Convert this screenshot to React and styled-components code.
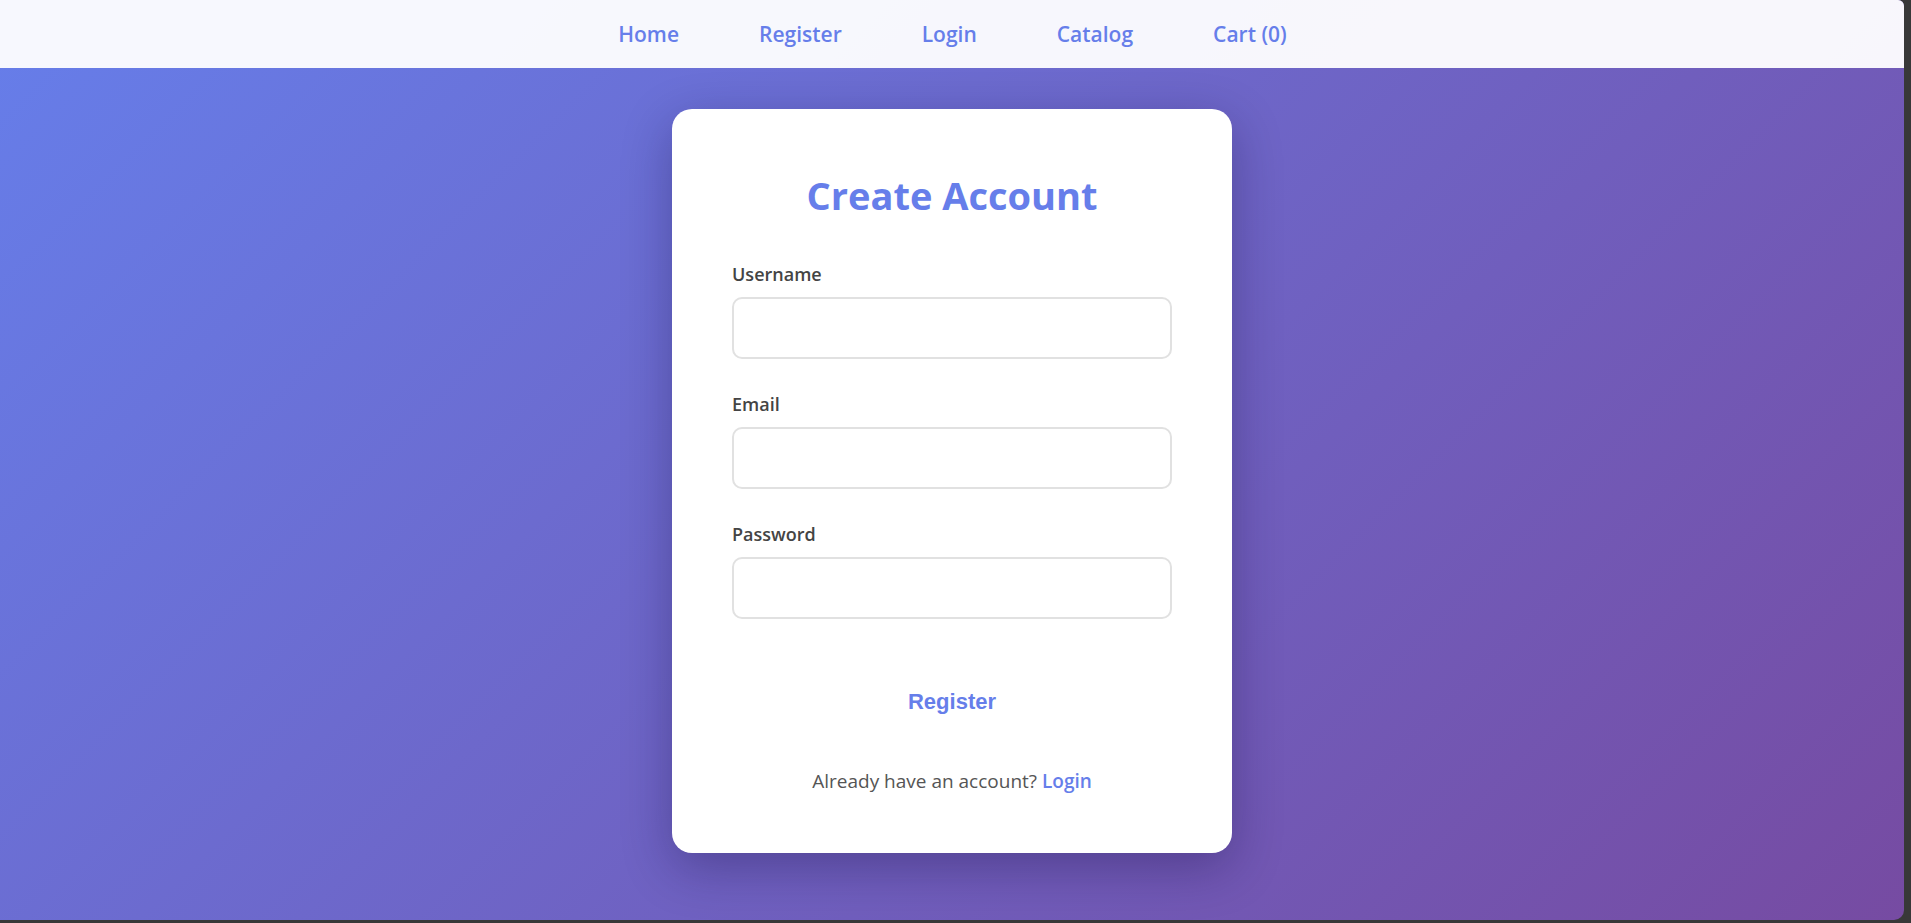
import React from "react";
import styled, { createGlobalStyle } from "styled-components";

const GlobalStyle = createGlobalStyle`
  html, body {
    margin: 0;
    padding: 0;
    background: #383838;
  }
  * { box-sizing: border-box; }
  body {
    font-family: "Segoe UI", "Open Sans", "Noto Sans", sans-serif;
  }
`;

const Frame = styled.div`
  width: 1904px;
  height: 920px;
  border-radius: 0 6px 10px 0;
  overflow: hidden;
  background: linear-gradient(135deg, #667eea 0%, #764ba2 100%);
  display: flex;
  flex-direction: column;
`;

const Nav = styled.nav`
  height: 68px;
  flex-shrink: 0;
  background: rgba(255, 255, 255, 0.95);
  display: flex;
  align-items: center;
  justify-content: center;
  gap: 80px;
  padding-left: 1px;
`;

const NavLink = styled.a`
  font-family: "Open Sans", "Noto Sans", sans-serif;
  font-size: 21px;
  font-weight: 600;
  color: #667eea;
  text-decoration: none;
  line-height: 28px;
  cursor: pointer;
`;

const Main = styled.main`
  flex: 1;
  display: flex;
  justify-content: center;
  align-items: flex-start;
  padding-top: 41px;
`;

const Card = styled.div`
  width: 560px;
  background: #ffffff;
  border-radius: 20px;
  padding: 60px 60px 59px;
  box-shadow: 0 15px 50px rgba(20, 10, 60, 0.32);
  font-family: "Open Sans", "Noto Sans", sans-serif;
`;

const Title = styled.h1`
  margin: 0 0 40px;
  text-align: center;
  font-size: 38px;
  line-height: 52px;
  font-weight: 700;
  color: #667eea;
`;

const Field = styled.div`
  margin-bottom: 32px;
`;

const Label = styled.label`
  display: block;
  font-size: 18px;
  font-weight: 600;
  line-height: 26px;
  color: #444;
  margin-bottom: 10px;
`;

const Input = styled.input`
  display: block;
  width: 100%;
  height: 62px;
  border: 2px solid #e1e1e1;
  border-radius: 10px;
  padding: 0 16px;
  font-size: 18px;
  font-family: inherit;
  background: #fff;
  outline: none;
`;

const SubmitButton = styled.button`
  display: block;
  width: 100%;
  height: 57px;
  margin-top: 54px;
  border: none;
  background: #ffffff;
  color: #667eea;
  font-family: "Liberation Sans", Arial, sans-serif;
  font-size: 22px;
  font-weight: 700;
  cursor: pointer;
`;

const Footer = styled.p`
  margin: 38px 0 0;
  text-align: center;
  font-size: 19px;
  line-height: 26px;
  color: #555;
`;

const FooterLink = styled.a`
  color: #667eea;
  font-weight: 600;
  text-decoration: none;
`;

const links = ["Home", "Register", "Login", "Catalog", "Cart (0)"];
const fields = [
  { id: "username", label: "Username", type: "text" },
  { id: "email", label: "Email", type: "email" },
  { id: "password", label: "Password", type: "password" },
];

export default function App() {
  return (
    <>
      <GlobalStyle />
      <Frame>
        <Nav>
          {links.map((l) => (
            <NavLink key={l}>{l}</NavLink>
          ))}
        </Nav>
        <Main>
          <Card>
            <Title>Create Account</Title>
            <form onSubmit={(e) => e.preventDefault()}>
              {fields.map((f) => (
                <Field key={f.id}>
                  <Label htmlFor={f.id}>{f.label}</Label>
                  <Input id={f.id} type={f.type} />
                </Field>
              ))}
              <SubmitButton type="submit">Register</SubmitButton>
            </form>
            <Footer>
              Already have an account? <FooterLink>Login</FooterLink>
            </Footer>
          </Card>
        </Main>
      </Frame>
    </>
  );
}
